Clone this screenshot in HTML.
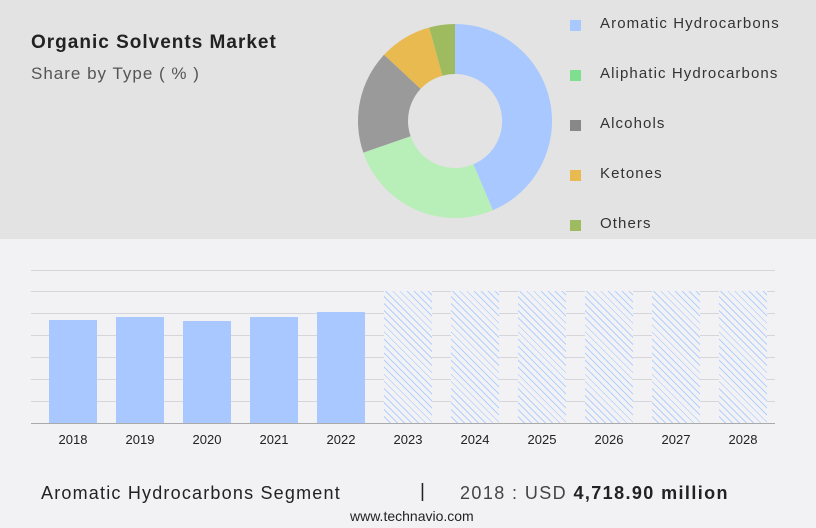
<html><head><style>
body{margin:0;width:816px;height:528px;position:relative;font-family:"Liberation Sans",sans-serif;background:#f2f2f4;overflow:hidden}
.top{position:absolute;left:0;top:0;width:816px;height:239px;background:#e3e3e3}
.t{position:absolute;white-space:nowrap}
.lg{position:absolute;left:570px;font-size:15px;color:#333;white-space:nowrap}
.lg i{position:absolute;left:0;top:5px;width:11px;height:11px}
.lg span{position:absolute;left:30px;top:0;letter-spacing:1.1px;white-space:nowrap}
.g{position:absolute;left:31px;width:744px;height:1px;background:#d6d6da}
.b{position:absolute;width:48px;background:#a8c8ff}
.h{position:absolute;width:48px;top:291px;height:132px;background:repeating-linear-gradient(45deg,#f2f2f4 0 4px,#b4d0ff 4px 5px)}
.y{position:absolute;top:432px;width:60px;text-align:center;font-size:13px;color:#222}
</style></head><body>
<div class="top"></div>
<div class="t" style="left:31px;top:32px;font-size:19px;font-weight:bold;color:#222;letter-spacing:1px">Organic Solvents Market</div>
<div class="t" style="left:31px;top:64px;font-size:17px;color:#555;letter-spacing:1px">Share by Type ( % )</div>
<svg style="position:absolute;left:0;top:0" width="816" height="240">
<g transform="translate(455,121)">
<path d="M0,-97 A97,97 0 0 1 37.9,89.3 L18.4,43.3 A47,47 0 0 0 0,-47Z" fill="#a8c8ff"/>
<path d="M37.9,89.3 A97,97 0 0 1 -91.7,31.6 L-44.4,15.3 A47,47 0 0 0 18.4,43.3Z" fill="#b8eeb8"/>
<path d="M-91.7,31.6 A97,97 0 0 1 -70.9,-66.2 L-34.4,-32.1 A47,47 0 0 0 -44.4,15.3Z" fill="#9a9a9a"/>
<path d="M-70.9,-66.2 A97,97 0 0 1 -25.8,-93.5 L-12.5,-45.3 A47,47 0 0 0 -34.4,-32.1Z" fill="#e8ba50"/>
<path d="M-25.8,-93.5 A97,97 0 0 1 0,-97 L0,-47 A47,47 0 0 0 -12.5,-45.3Z" fill="#9fbb5f"/>
</g></svg>
<div class="lg" style="top:15px"><i style="background:#a8c8ff"></i><span>Aromatic Hydrocarbons</span></div>
<div class="lg" style="top:65px"><i style="background:#7ee08e"></i><span>Aliphatic Hydrocarbons</span></div>
<div class="lg" style="top:115px"><i style="background:#888"></i><span>Alcohols</span></div>
<div class="lg" style="top:165px"><i style="background:#e8ba50"></i><span>Ketones</span></div>
<div class="lg" style="top:215px"><i style="background:#9fbb5f"></i><span>Others</span></div>
<div class="g" style="top:270px"></div><div class="g" style="top:291px"></div><div class="g" style="top:313px"></div><div class="g" style="top:335px"></div><div class="g" style="top:357px"></div><div class="g" style="top:379px"></div><div class="g" style="top:401px"></div>
<div class="b" style="left:49px;top:320px;height:103px"></div>
<div class="b" style="left:116px;top:317px;height:106px"></div>
<div class="b" style="left:183px;top:321px;height:102px"></div>
<div class="b" style="left:250px;top:317px;height:106px"></div>
<div class="b" style="left:317px;top:312px;height:111px"></div>
<div class="h" style="left:384px"></div><div class="h" style="left:451px"></div><div class="h" style="left:518px"></div><div class="h" style="left:585px"></div><div class="h" style="left:652px"></div><div class="h" style="left:719px"></div>
<div class="g" style="top:423px;background:#aaa"></div>
<div class="y" style="left:43px">2018</div><div class="y" style="left:110px">2019</div><div class="y" style="left:177px">2020</div><div class="y" style="left:244px">2021</div><div class="y" style="left:311px">2022</div><div class="y" style="left:378px">2023</div><div class="y" style="left:445px">2024</div><div class="y" style="left:512px">2025</div><div class="y" style="left:579px">2026</div><div class="y" style="left:646px">2027</div><div class="y" style="left:713px">2028</div>
<div class="t" style="left:41px;top:483px;font-size:18px;color:#222;letter-spacing:1.2px">Aromatic Hydrocarbons Segment</div>
<div class="t" style="left:420px;top:481px;font-size:19px;color:#222">|</div>
<div class="t" style="left:460px;top:483px;font-size:18px;color:#444;letter-spacing:1.4px">2018 : USD <b style="color:#222">4,718.90 million</b></div>
<div class="t" style="left:350px;top:508px;font-size:14px;color:#222">www.technavio.com</div>
</body></html>
